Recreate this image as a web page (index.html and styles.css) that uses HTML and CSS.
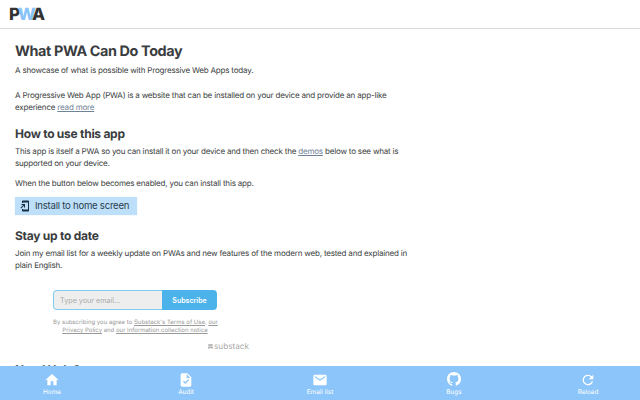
FILE: index.html
```html
<!DOCTYPE html>
<html lang="en">
<head>
<meta charset="utf-8">
<title>What PWA Can Do Today</title>
<link rel="stylesheet" href="styles.css">
</head>
<body>
<header class="header"><a class="logo">P<span class="logo-w">W</span><span class="logo-a">A</span></a></header>
<main class="content">
  <h1>What PWA Can Do Today</h1>
  <p class="tagline">A showcase of what is possible with Progressive Web Apps today.</p>
  <p class="about">A Progressive Web App (PWA) is a website that can be installed on your device and provide an app-like<br>experience <a>read more</a></p>
  <h2>How to use this app</h2>
  <p class="usage">This app is itself a PWA so you can install it on your device and then check the <a>demos</a> below to see what is<br>supported on your device.</p>
  <p class="hint">When the button below becomes enabled, you can install this app.</p>
  <button class="install">
    <svg viewBox="0 0 24 24"><path d="M18 1.010 8 1c-1.100 0-2 .9-2 2v3h2V5h10v14H8v-1H6v3c0 1.100.9 2 2 2h10c1.100 0 2-.9 2-2V3c0-1.100-.9-1.990-2-1.990zM10 15h2V8H5v2h3.590L3 15.590 4.410 17 10 11.410z"/></svg>
    <span>Install to home screen</span>
  </button>
  <h2 class="stay">Stay up to date</h2>
  <p class="join">Join my email list for a weekly update on PWAs and new features of the modern web, tested and explained in<br>plain English.</p>
  <section class="signup">
    <form class="field"><input type="text" placeholder="Type your email..."><button type="button">Subscribe</button></form>
    <p class="terms">By subscribing you agree to <u>Substack's Terms of Use</u>, <u>our</u><br><u>Privacy Policy</u> and <u>our Information collection notice</u></p>
    <div class="brand"><svg viewBox="0 0 10 11"><path d="M0 0h10v1.500H0zM0 3h10v1.500H0zM0 5.500h10V11L5 8.200 0 11z"/></svg><span>substack</span></div>
  </section>
  <h2 class="help">Need Help?</h2>
</main>
<nav class="tabs">
  <a><svg viewBox="0 0 24 24"><path d="M10 20v-6h4v6h5v-8h3L12 3 2 12h3v8z"/></svg><span>Home</span></a>
  <a><svg viewBox="0 0 24 24"><path fill-rule="evenodd" d="M14 2H6c-1.100 0-2 .9-2 2v16c0 1.100.9 2 2 2h12c1.100 0 2-.9 2-2V8zM10.940 18 7.400 14.460l1.410-1.410 2.120 2.120 4.240-4.240 1.410 1.410zM13 9V3.500L18.500 9z"/></svg><span>Audit</span></a>
  <a><svg viewBox="0 0 24 24"><path d="M20 4H4c-1.100 0-2 .9-2 2v12c0 1.100.9 2 2 2h16c1.100 0 2-.9 2-2V6c0-1.100-.9-2-2-2zm0 4-8 5-8-5V6l8 5 8-5z"/></svg><span>Email list</span></a>
  <a><svg class="github" viewBox="0 0 16 16"><path d="M8 0C3.580 0 0 3.580 0 8c0 3.540 2.290 6.530 5.470 7.590.4.070.55-.17.55-.38 0-.19-.01-.82-.01-1.490-2.010.37-2.530-.49-2.690-.94-.09-.23-.48-.94-.82-1.130-.28-.15-.68-.52-.01-.53.63-.01 1.080.58 1.230.82.72 1.210 1.870.87 2.330.66.070-.52.28-.87.51-1.070-1.780-.2-3.640-.89-3.640-3.950 0-.87.31-1.590.82-2.150-.08-.2-.36-1.020.08-2.120 0 0 .67-.21 2.200.82.64-.18 1.320-.27 2-.27s1.360.09 2 .27c1.530-1.040 2.200-.82 2.200-.82.44 1.100.16 1.920.08 2.120.51.56.82 1.270.82 2.150 0 3.070-1.870 3.750-3.650 3.950.29.25.54.73.54 1.480 0 1.070-.01 1.930-.01 2.200 0 .21.15.46.55.38A8.010 8.010 0 0 0 16 8c0-4.420-3.580-8-8-8z"/></svg><span>Bugs</span></a>
  <a><svg viewBox="0 0 24 24"><path d="M17.650 6.350A7.960 7.960 0 0 0 12 4a8 8 0 1 0 7.730 10h-2.080A6 6 0 1 1 12 6c1.660 0 3.140.69 4.220 1.780L13 11h7V4z"/></svg><span>Reload</span></a>
</nav>
</body>
</html>
```
FILE: styles.css
```css
* { box-sizing: border-box; }
body {
  margin: 0;
  height: 400px;
  overflow: hidden;
  display: flex;
  flex-direction: column;
  background: #fff;
  color: #3a3d40;
  font: 8px/12px Inter, "Liberation Sans", sans-serif;
  text-rendering: geometricPrecision;
}
svg { display: block; flex: none; fill: currentColor; }
h1, h2, p { margin: 0; white-space: nowrap; }
p { letter-spacing: -0.186px; }
.header {
  flex: none;
  height: 29px;
  padding: 5px 9px;
  border-bottom: 1px solid #dcdcdc;
}
.logo { display: block; font-size: 17px; line-height: 20px; font-weight: 800; letter-spacing: -2.4px; color: #333; }
.logo-w { color: #88c3f9; }
.content { flex: 1; min-height: 0; overflow: hidden; padding: 13px 15px 0; }
h1 { font-size: 14.4px; line-height: 20px; font-weight: 700; letter-spacing: -0.39px; }
h2 { font-size: 12px; line-height: 16px; font-weight: 700; letter-spacing: -0.26px; }
.tagline { margin-top: 2px; }
.about { margin: 13px 0 13px; }
.usage { margin-top: 3px; }
.hint { margin-top: 8px; }
.content a { color: #6f8296; text-decoration: underline; }
.install {
  display: flex;
  align-items: center;
  gap: 4px;
  width: 122px;
  height: 18px;
  margin: 8px 0 13px;
  padding: 0 4px;
  border: 0;
  border-radius: 1px;
  background: #bddff9;
  box-shadow: 0 0 1px #a9cdea;
  color: #2c3e4e;
  font: 9.6px/18px Inter, sans-serif;
  letter-spacing: -0.25px;
  white-space: nowrap;
}
.install svg { width: 12px; height: 12px; color: #152f45; }
.join { margin-top: 3px; }
.signup { width: 240px; margin-top: 19px; }
.field { display: flex; width: 164px; height: 20px; margin-left: 38px; }
.field input {
  width: 109px;
  padding: 0 6px;
  border: 1px solid #7fcdf0;
  border-right: 0;
  border-radius: 4px 0 0 4px;
  background: #eee;
  font: 7.2px Inter, sans-serif;
}
.field input::placeholder { color: #aaa; }
.field button {
  width: 55px;
  padding: 0;
  border: 0;
  border-radius: 0 4px 4px 0;
  background: #4cb2ea;
  color: #fff;
  font: 600 7px Inter, sans-serif;
}
.terms { width: 164px; margin: 9px 0 0 38px; color: #999; font-size: 6px; line-height: 8px; text-align: center; letter-spacing: 0; }
.terms u { text-decoration-thickness: 0.5px; }
.brand { display: flex; align-items: center; justify-content: flex-end; gap: 1px; margin: 6px 6px 0 0; color: #aaa; font: 8.2px/10px Inter, sans-serif; }
.brand svg { width: 5px; height: 5px; }
.help { margin-top: 11px; }
.tabs {
  flex: none;
  display: grid;
  grid-template-columns: repeat(5, 64px);
  justify-content: space-between;
  height: 34px;
  padding: 6px 20px 0;
  background: #8bc5f9;
  color: #fff;
  font-size: 6.4px;
  line-height: 8px;
}
.tabs a { display: flex; flex-direction: column; align-items: center; }
.tabs svg { width: 16px; height: 16px; }
.tabs .github { width: 14px; height: 14px; margin: 0 1px 2px; }
```
